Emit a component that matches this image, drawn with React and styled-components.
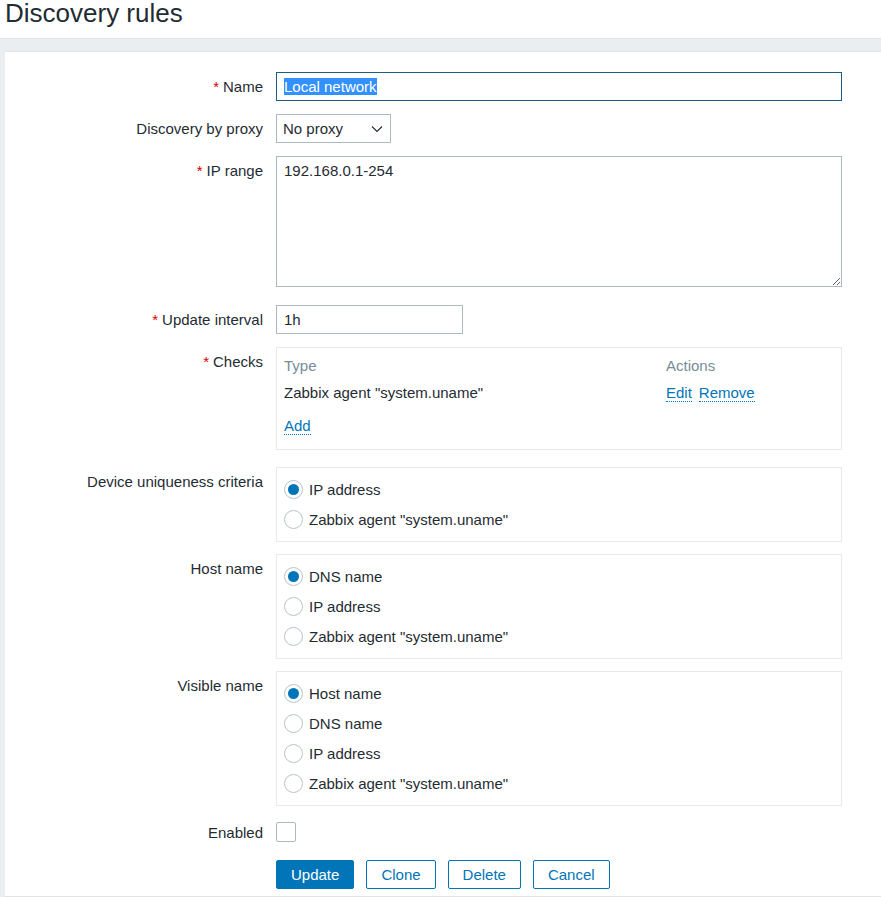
import React from "react";
import styled, { createGlobalStyle } from "styled-components";

const GlobalStyle = createGlobalStyle`
  html, body {
    margin: 0;
    padding: 0;
    background: #ebeef0;
  }
  body {
    font-family: "Liberation Sans", Arial, sans-serif;
    font-size: 15px;
    color: #1f2c33;
  }
`;

const Header = styled.header`
  box-sizing: border-box;
  display: flex;
  align-items: flex-start;
  height: 39px;
  background: #ffffff;
  border-bottom: 1px solid #dfe4e7;
  padding: 0 5px;
`;

const Title = styled.h1`
  margin: 0;
  font-size: 26px;
  font-weight: normal;
  line-height: 27px;
  color: #1f2c33;
`;

const Main = styled.main`
  padding: 12px 0 0 5px;
`;

const Panel = styled.div`
  background: #ffffff;
  border-top: 1px solid #dfe4e7;
  padding: 20px 0 7px;
  border-bottom: 2px solid #dfe4e7;
`;

const Row = styled.div`
  display: grid;
  grid-template-columns: 258px 566px;
  column-gap: 13px;
  margin-bottom: ${(p) => p.$mb ?? 12}px;
`;

const Label = styled.label`
  text-align: right;
  padding-top: ${(p) => p.$pt ?? 6}px;
  line-height: 17px;
  white-space: nowrap;
`;

const Req = styled.span`
  color: #d40000;
  margin-right: 4px;
`;

const TextInput = styled.input`
  box-sizing: border-box;
  width: ${(p) => p.$w || "100%"};
  height: 29px;
  padding: 0 7px;
  border: 1px solid ${(p) => (p.$focus ? "#1d5e80" : "#acbbc2")};
  font: inherit;
  color: #1f2c33;
  outline: none;
  background: #fff;
  &::selection {
    background: #3390ff;
    color: #fff;
  }
`;

const SelectBox = styled.div`
  box-sizing: border-box;
  width: 115px;
  height: 29px;
  border: 1px solid #acbbc2;
  display: flex;
  align-items: center;
  justify-content: space-between;
  padding: 0 7px 0 6px;
  line-height: 17px;
`;

const TextArea = styled.textarea`
  box-sizing: border-box;
  width: 566px;
  height: 131px;
  padding: 5px 7px;
  border: 1px solid #acbbc2;
  font: inherit;
  line-height: 17px;
  color: #1f2c33;
  resize: both;
  outline: none;
  display: block;
`;

const Box = styled.div`
  box-sizing: border-box;
  border: 1px solid #e6eaec;
  padding: ${(p) => p.$pad || "6px 7px 7px"};
`;

const ChecksGrid = styled.div`
  display: grid;
  grid-template-columns: 382px auto;
  line-height: 17px;
`;

const Th = styled.div`
  color: #768d99;
  margin-bottom: 10px;
`;

const Actions = styled.div`
  display: flex;
  gap: 7px;
`;

const Link = styled.a`
  color: #0275b8;
  text-decoration: none;
  border-bottom: 1px dotted #0275b8;
  cursor: pointer;
`;

const AddRow = styled.div`
  margin-top: 15px;
  line-height: 17px;
`;

const RadioItem = styled.label`
  display: flex;
  align-items: center;
  height: 30px;
  gap: 6px;
`;

const RadioCircle = styled.span`
  box-sizing: border-box;
  width: 19px;
  height: 19px;
  border-radius: 50%;
  border: 1px solid #b8c3c9;
  display: flex;
  align-items: center;
  justify-content: center;
  &::after {
    content: "";
    width: 11px;
    height: 11px;
    border-radius: 50%;
    background: ${(p) => (p.$on ? "#0275b8" : "transparent")};
  }
`;

const Checkbox = styled.span`
  display: block;
  box-sizing: border-box;
  width: 20px;
  height: 20px;
  border: 1px solid #acbbc2;
  border-radius: 2px;
`;

const Buttons = styled.div`
  display: flex;
  gap: 12px;
`;

const Button = styled.button`
  box-sizing: border-box;
  height: 29px;
  padding: 0 ${(p) => p.$px}px;
  border: 1px solid #0275b8;
  border-radius: 2px;
  background: ${(p) => (p.$primary ? "#0275b8" : "#ffffff")};
  color: ${(p) => (p.$primary ? "#ffffff" : "#0275b8")};
  font: inherit;
  cursor: pointer;
`;

const Chevron = () => (
  <svg width="12" height="8" viewBox="0 0 12 8">
    <path d="M1 1.5 L6 6.5 L11 1.5" fill="none" stroke="#1f2c33" strokeWidth="1.1" />
  </svg>
);

const RadioGroup = ({ options, selected }) => (
  <Box>
    {options.map((o, i) => (
      <RadioItem key={o}>
        <RadioCircle $on={i === selected} />
        {o}
      </RadioItem>
    ))}
  </Box>
);

export default function App() {
  const nameRef = React.useRef(null);
  React.useEffect(() => {
    if (nameRef.current) {
      nameRef.current.focus();
      nameRef.current.select();
    }
  }, []);

  return (
    <>
      <GlobalStyle />
      <Header>
        <Title>Discovery rules</Title>
      </Header>
      <Main>
        <Panel>
          <Row $mb={13}>
            <Label>
              <Req>*</Req>Name
            </Label>
            <TextInput ref={nameRef} $focus defaultValue="Local network" />
          </Row>
          <Row $mb={13}>
            <Label>Discovery by proxy</Label>
            <SelectBox>
              No proxy
              <Chevron />
            </SelectBox>
          </Row>
          <Row $mb={18}>
            <Label>
              <Req>*</Req>IP range
            </Label>
            <TextArea defaultValue="192.168.0.1-254" />
          </Row>
          <Row $mb={13}>
            <Label>
              <Req>*</Req>Update interval
            </Label>
            <TextInput $w="187px" defaultValue="1h" />
          </Row>
          <Row $mb={17}>
            <Label>
              <Req>*</Req>Checks
            </Label>
            <Box $pad="9px 7px 15px">
              <ChecksGrid>
                <Th>Type</Th>
                <Th>Actions</Th>
                <div>Zabbix agent "system.uname"</div>
                <Actions>
                  <Link>Edit</Link>
                  <Link>Remove</Link>
                </Actions>
              </ChecksGrid>
              <AddRow>
                <Link>Add</Link>
              </AddRow>
            </Box>
          </Row>
          <Row>
            <Label>Device uniqueness criteria</Label>
            <RadioGroup options={["IP address", 'Zabbix agent "system.uname"']} selected={0} />
          </Row>
          <Row>
            <Label>Host name</Label>
            <RadioGroup options={["DNS name", "IP address", 'Zabbix agent "system.uname"']} selected={0} />
          </Row>
          <Row $mb={16}>
            <Label>Visible name</Label>
            <RadioGroup
              options={["Host name", "DNS name", "IP address", 'Zabbix agent "system.uname"']}
              selected={0}
            />
          </Row>
          <Row $mb={18}>
            <Label $pt={2}>Enabled</Label>
            <Checkbox />
          </Row>
          <Row $mb={0}>
            <div />
            <Buttons>
              <Button $primary $px={14}>Update</Button>
              <Button $px={14}>Clone</Button>
              <Button $px={14}>Delete</Button>
              <Button $px={14}>Cancel</Button>
            </Buttons>
          </Row>
        </Panel>
      </Main>
    </>
  );
}
